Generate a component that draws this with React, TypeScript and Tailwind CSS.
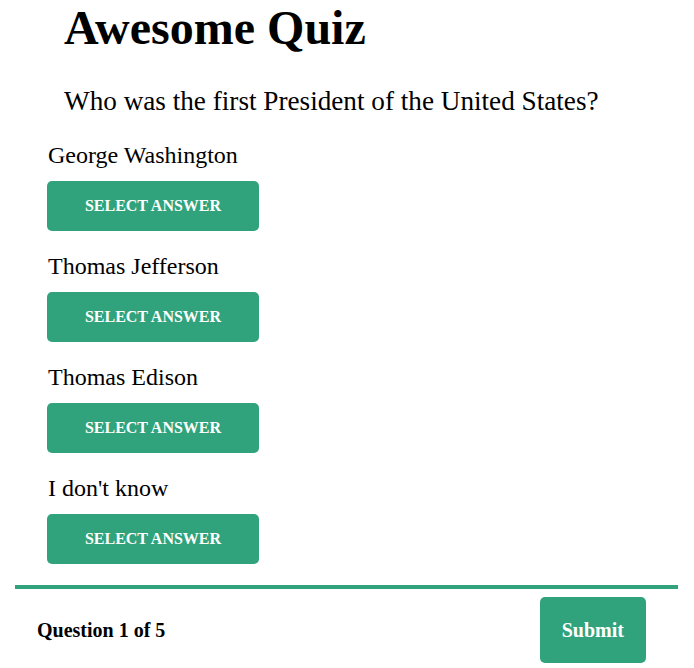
const answers = ["George Washington", "Thomas Jefferson", "Thomas Edison", "I don't know"];

const App = () => {
  return (
    <div className="px-[15px] pr-[16px] font-['Liberation_Serif',serif] text-black">
      <h1 className="pl-[49px] text-[48px] leading-[55px] font-bold">Awesome Quiz</h1>
      <p className="pl-[49px] mt-[31px] text-[27.2px] leading-[31px]">
        Who was the first President of the United States?
      </p>

      <div className="pl-[32px] mt-6">
        {answers.map((answer, i) => (
          <div key={answer} className={i > 0 ? "mt-[21px]" : ""}>
            <div className="text-[24px] leading-[28px] pl-px">{answer}</div>
            <button className="mt-[12px] w-[212px] h-[50px] rounded-[5px] bg-[#30a37c] text-white text-[16px] font-bold uppercase">
              Select Answer
            </button>
          </div>
        ))}
      </div>

      <div className="mt-[21px] border-t-4 border-[#30a37c] pt-2 pl-[22px] pr-[32px] flex items-center justify-between">
        <span className="text-[20px] font-bold">Question 1 of 5</span>
        <button className="h-[66px] px-[22px] rounded-[5px] bg-[#30a37c] text-white text-[20px] font-bold">
          Submit
        </button>
      </div>
    </div>
  );
};

export default App;
